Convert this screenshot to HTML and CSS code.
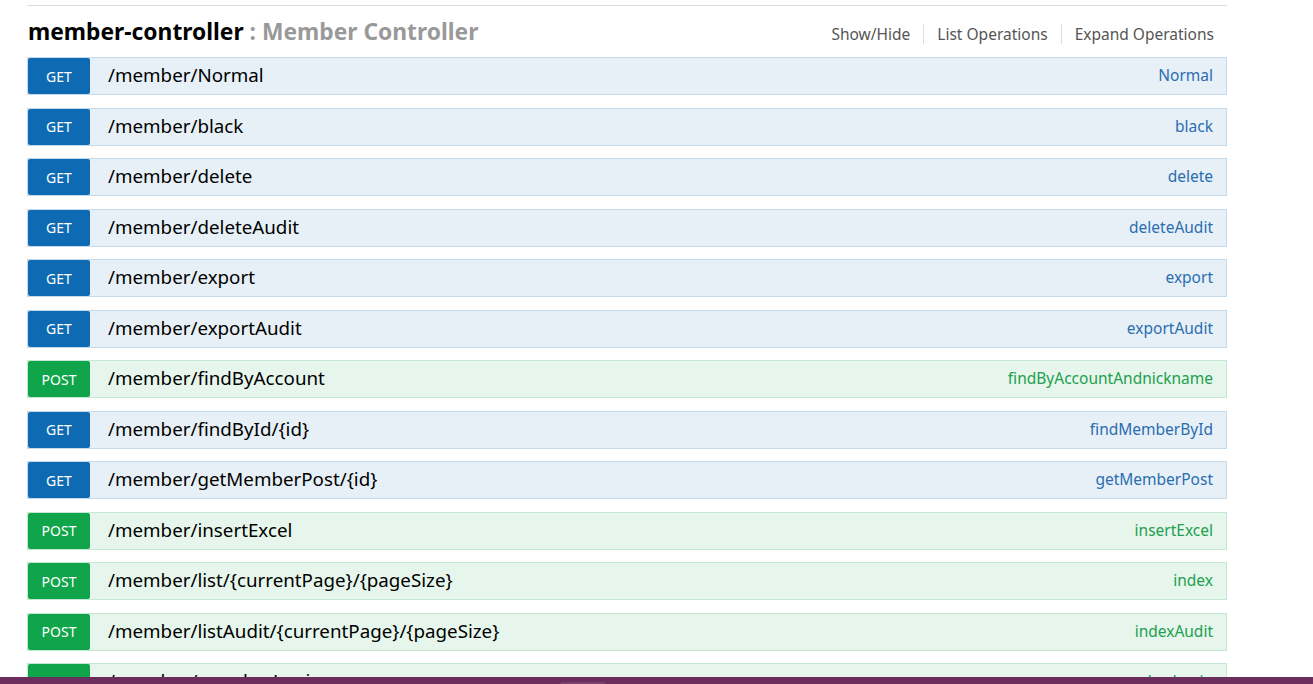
FILE: index.html
```html
<!DOCTYPE html>
<html>
	<head>
		<link rel="stylesheet" href="styles.css">
	</head>
	<body>
		<div class="resource">
			<div class="heading">
				<h2><span class="name">member-controller</span> <span class="desc">: Member Controller</span></h2>
				<ul class="options">
					<li>Show/Hide</li>
					<li>List Operations</li>
					<li>Expand Operations</li>
				</ul>
			</div>
			<div class="op get"><span class="method">GET</span><span class="path">/member/Normal</span><span class="summary">Normal</span></div>
			<div class="op get"><span class="method">GET</span><span class="path">/member/black</span><span class="summary">black</span></div>
			<div class="op get"><span class="method">GET</span><span class="path">/member/delete</span><span class="summary">delete</span></div>
			<div class="op get"><span class="method">GET</span><span class="path">/member/deleteAudit</span><span class="summary">deleteAudit</span></div>
			<div class="op get"><span class="method">GET</span><span class="path">/member/export</span><span class="summary">export</span></div>
			<div class="op get"><span class="method">GET</span><span class="path">/member/exportAudit</span><span class="summary">exportAudit</span></div>
			<div class="op post"><span class="method">POST</span><span class="path">/member/findByAccount</span><span class="summary">findByAccountAndnickname</span></div>
			<div class="op get"><span class="method">GET</span><span class="path">/member/findById/{id}</span><span class="summary">findMemberById</span></div>
			<div class="op get"><span class="method">GET</span><span class="path">/member/getMemberPost/{id}</span><span class="summary">getMemberPost</span></div>
			<div class="op post"><span class="method">POST</span><span class="path">/member/insertExcel</span><span class="summary">insertExcel</span></div>
			<div class="op post"><span class="method">POST</span><span class="path">/member/list/{currentPage}/{pageSize}</span><span class="summary">index</span></div>
			<div class="op post"><span class="method">POST</span><span class="path">/member/listAudit/{currentPage}/{pageSize}</span><span class="summary">indexAudit</span></div>
			<div class="op post"><span class="method">POST</span><span class="path">/member/memberLogin</span><span class="summary">memberLogin</span></div>
		</div>
		<div class="bottombar"><span class="tab"></span></div>
	</body>
</html>
```

FILE: styles.css
```css
body {
	margin: 0; font-family: "Noto Sans", "Open Sans", sans-serif; background: #fff; overflow: hidden;
}
.resource {
	width: 1200px; margin-left: 27px; margin-top: 5px;
}
.heading {
	border-top: 1px solid #ddd; height: 51px; display: flex; align-items: center; justify-content: space-between;
}
.heading h2 {
	margin: 0; font-size: 22.8px; font-weight: bold; padding-left: 1px; position: relative; top: -0.5px;
}
.name {
	color: #000;
}
.desc {
	color: #999;
}
.options {
	list-style: none; margin: 0; padding: 0; display: flex; position: relative; top: 2px;
}
.options li {
	font-size: 15.5px; color: #555; padding: 0 13px; border-left: 1px solid #ddd; line-height: 20px;
}
.options li:first-child {
	border-left: none;
}
.op {
	height: 36px; border: 1px solid; margin-bottom: 12.5px; display: flex; align-items: center;
}
.method {
	width: 62px; height: 36px; border-radius: 2px; color: #fff; font-size: 14px;
	display: flex; align-items: center; justify-content: center;
}
.path {
	padding-left: 18px; font-size: 18.75px; color: #000; flex: 1; position: relative; top: -1.5px;
}
.summary {
	padding-right: 13px; font-size: 15.5px; position: relative; top: -1px;
}
.get {
	background: #e7f0f7; border-color: #c3d9ec;
}
.get .method {
	background: #0f6ab4;
}
.get .summary {
	color: #2a6db0;
}
.post {
	background: #e7f6ec; border-color: #c3e8d1;
}
.post .method {
	background: #10a54a;
}
.post .summary {
	color: #22a04f;
}
.bottombar {
	position: fixed; left: 0; right: 0; bottom: 0; height: 7px; background: #6b2d5c;
}
.bottombar .tab {
	position: absolute; left: 560px; top: 5px; width: 46px; height: 4px; background: #7a4169; border-radius: 3px 3px 0 0;
}
```
